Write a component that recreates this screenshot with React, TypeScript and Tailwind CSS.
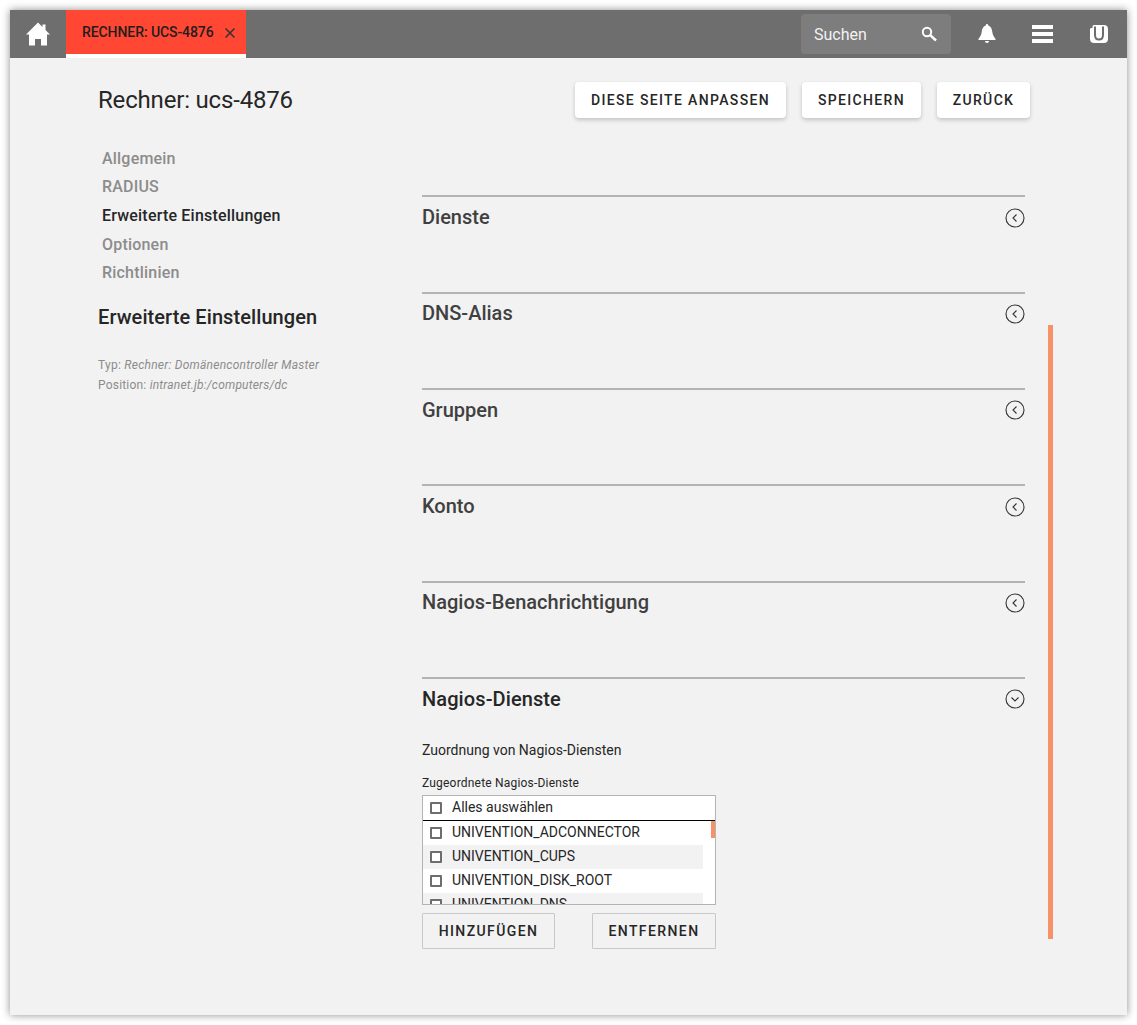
const sections = ['Dienste', 'DNS-Alias', 'Gruppen', 'Konto', 'Nagios-Benachrichtigung']
const navItems = ['Allgemein', 'RADIUS', 'Erweiterte Einstellungen', 'Optionen', 'Richtlinien']
const rows = ['UNIVENTION_ADCONNECTOR', 'UNIVENTION_CUPS', 'UNIVENTION_DISK_ROOT', 'UNIVENTION_DNS']

function Circle({ open }: { open?: boolean }) {
  return (
    <svg width="20" height="20" viewBox="0 0 20 20" fill="none" stroke="#333" className="shrink-0">
      <circle cx="10" cy="10" r="9" strokeWidth="1.1" />
      {open ? <path d="M6.500 8.500 10 12l3.500-3.500" strokeWidth="1.1" /> : <path d="M11.500 6.500 8 10l3.500 3.500" strokeWidth="1.1" />}
    </svg>
  )
}

function TopButton({ label, width }: { label: string; width: string }) {
  return (
    <button className={`h-9 ${width} bg-white rounded-sm text-sm font-medium tracking-[1.35px] text-[#262626] shadow-[0_2px_4px_rgba(0,0,0,0.2)]`}>
      {label}
    </button>
  )
}

function Check() {
  return <span className="w-3 h-3 border-2 border-[#6e6e6e] rounded-[1px] bg-white shrink-0" />
}

export default function App() {
  return (
    <div className="min-h-[1025px] bg-white p-[10px] font-['Roboto',sans-serif]">
      <div className="relative w-[1117px] h-[1005px] bg-[#f2f2f2] shadow-[0_0_8px_rgba(0,0,0,0.45)]">
        {/* Kopfzeile */}
        <header className="h-12 bg-[#6e6e6e] flex items-stretch">
          <div className="w-14 flex items-center justify-center">
            <svg width="24" height="24" viewBox="0 0 24 24" fill="#fff">
              <path d="M12 .5 0 12.500h3V23.500h6V17h6v6.500h6V12.500h3l-4.500-4.500V2.500h-3V5z" />
            </svg>
          </div>
          <div className="w-[180px] bg-[#ff4733] border-b-4 border-white flex items-center pl-4 text-sm font-medium text-[#1e1e1e] -tracking-[0.08px]">
            <span>RECHNER: UCS-4876</span>
            <svg width="10" height="10" viewBox="0 0 10 10" stroke="#333" strokeWidth="1.500" className="ml-[11px] mt-0.5">
              <path d="M.5.5l9 9M9.500.5l-9 9" />
            </svg>
          </div>
          <div className="ml-auto flex items-center">
            <div className="w-[150px] h-10 bg-[#7d7d7d] rounded flex items-center justify-between pl-[13px] pr-[14px] text-base text-[#f2f2f2]">
              <span className="pt-0.5">Suchen</span>
              <svg width="16" height="16" viewBox="0 0 16 16" fill="none" stroke="#fff" strokeWidth="2">
                <circle cx="6" cy="6" r="4.200" />
                <path d="M9.200 9.200 15 14.500" strokeWidth="2.500" />
              </svg>
            </div>
            <svg width="20" height="20" viewBox="0 0 20 20" fill="#fff" className="ml-[26px]">
              <path d="M10 0c.8 0 1.200.6 1.300 1.500C14 2.500 15 5 15.300 8c.3 3 1.700 5 3.200 6.800v1.200h-17v-1.200C3 13 4.400 11 4.700 8 5 5 6 2.500 8.700 1.500 8.800.6 9.200 0 10 0z" />
              <path d="M8 17h4a2 2 0 0 1-4 0z" />
            </svg>
            <div className="ml-[35px] w-[21px] flex flex-col gap-[3px]">
              <span className="h-1 bg-white" />
              <span className="h-1 bg-white" />
              <span className="h-1 bg-white" />
            </div>
            <svg width="18" height="18" viewBox="0 0 18 18" className="ml-[37px] mr-[19px]">
              <path d="M4 0h10c2.500 0 4 1.500 4 4v10c0 2.500-1.500 4-4 4H4c-2.500 0-4-1.500-4-4V4.500c0-1 .6-1.500 1.500-1.500H2.500V2C2.500 .8 3 0 4 0z" fill="#fff" />
              <path d="M5 1.500V10c0 3 1.500 4.500 4 4.500s4-1.500 4-4.500V1.500" fill="none" stroke="#6e6e6e" strokeWidth="2" />
            </svg>
          </div>
        </header>

        <main className="flex pl-[88px] pr-[102px]">
          {/* linke Spalte */}
          <aside className="w-[324px] shrink-0">
            <h1 className="mt-[27px] text-2xl leading-[30px] -tracking-[0.18px] text-[#262626]">Rechner: ucs-4876</h1>
            <nav className="mt-[29.800px] pl-1 flex flex-col">
              {navItems.map((item) => (
                <div
                  key={item}
                  className={`h-[28.600px] leading-[28.600px] text-base tracking-[0.2px] font-medium ${
                    item === 'Erweiterte Einstellungen' ? 'text-[#262626]' : 'text-[#8c8c8c]'
                  }`}
                >
                  {item}
                </div>
              ))}
            </nav>
            <h2 className="mt-[15.200px] text-xl leading-7 font-medium tracking-[0.08px] text-[#262626]">Erweiterte Einstellungen</h2>
            <div className="mt-6 text-xs leading-5 text-[#8c8c8c]">
              <div className="tracking-[0.25px]">
                Typ: <i>Rechner: Domänencontroller Master</i>
              </div>
              <div className="tracking-[0.2px]">
                Position: <i>intranet.jb:/computers/dc</i>
              </div>
            </div>
          </aside>

          {/* rechte Spalte */}
          <div className="flex-1 min-w-0">
            <div className="flex justify-end gap-4 mt-6 mr-[-5px]">
              <TopButton label="DIESE SEITE ANPASSEN" width="w-[211px]" />
              <TopButton label="SPEICHERN" width="w-[119px]" />
              <TopButton label="ZURÜCK" width="w-[93px]" />
            </div>
            <div className="mt-[77.200px]">
              {sections.map((title) => (
                <section key={title} className="h-[96.400px] border-t-2 border-[#b3b3b3] pt-[5.600px] flex justify-between items-start">
                  <h3 className="text-xl leading-7 font-medium text-[#404040]">{title}</h3>
                  <span className="mt-[4.800px]">
                    <Circle />
                  </span>
                </section>
              ))}
              <section className="border-t-2 border-[#b3b3b3] pt-[5.600px]">
                <div className="flex justify-between items-start">
                  <h3 className="text-xl leading-7 font-medium tracking-[0.1px] text-[#262626]">Nagios-Dienste</h3>
                  <span className="mt-[4.500px]">
                    <Circle open />
                  </span>
                </div>
                <p className="mt-[27px] text-sm leading-5 text-[#262626]">Zuordnung von Nagios-Diensten</p>
                <label className="block mt-[15px] text-xs leading-4 tracking-[0.2px] text-[#262626]">Zugeordnete Nagios-Dienste</label>
                <div className="relative mt-1 w-[294px] h-[110px] bg-white border border-[#b3b3b3] overflow-hidden text-sm text-[#262626]">
                  <div className="h-6 flex items-center border-b border-black pl-[7px] gap-[10px] box-content">
                    <Check />
                    <span className="pb-0.5">Alles auswählen</span>
                  </div>
                  {rows.map((row, i) => (
                    <div key={row} className={`h-6 w-[280px] flex items-center pl-[7px] gap-[10px] ${i % 2 ? 'bg-[#f2f2f2]' : ''}`}>
                      <Check />
                      <span className="pb-0.5">{row}</span>
                    </div>
                  ))}
                  <div className="absolute right-0 top-[25px] w-1 h-[17px] bg-[#f79268]" />
                </div>
                <div className="mt-2 w-[294px] flex justify-between">
                  <button className="h-9 w-[133px] border border-[#c8c8c8] rounded-[1px] text-sm font-medium tracking-[1.4px] text-[#262626]">HINZUFÜGEN</button>
                  <button className="h-9 w-[124px] border border-[#c8c8c8] rounded-[1px] text-sm font-medium tracking-[1.4px] text-[#262626]">ENTFERNEN</button>
                </div>
              </section>
            </div>
          </div>
        </main>

        {/* Scrollbalken */}
        <div className="absolute left-[1038px] top-[315px] w-[5px] h-[614px] bg-[#f79268]" />
      </div>
    </div>
  )
}
